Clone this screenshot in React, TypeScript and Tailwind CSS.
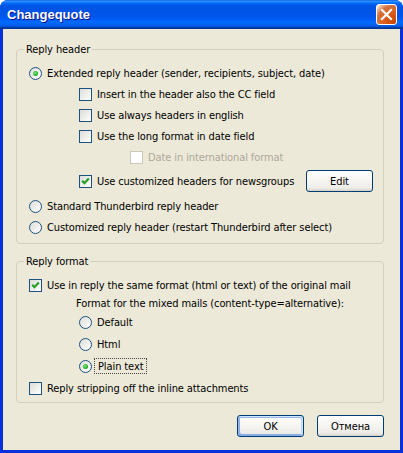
import React from "react";

function Check({ checked = false, disabled = false }: { checked?: boolean; disabled?: boolean }) {
  return (
    <span
      className={
        disabled
          ? "flex h-[13px] w-[13px] shrink-0 items-center justify-center border border-[#cac8bb] bg-white"
          : "flex h-[13px] w-[13px] shrink-0 items-center justify-center border border-[#1c5180] bg-[linear-gradient(135deg,#dcdcd7_0%,#ffffff_100%)]"
      }
    >
      {checked && (
        <svg width="11" height="11" viewBox="0 0 11 11">
          <path d="M2.2 4.8 L4.4 7.2 L8.8 2.6" stroke="#21a121" strokeWidth="2.2" fill="none" />
        </svg>
      )}
    </span>
  );
}

function Radio({ checked = false }: { checked?: boolean }) {
  return (
    <span className="flex h-[13px] w-[13px] shrink-0 items-center justify-center rounded-full border border-[#1c5180] bg-[linear-gradient(135deg,#dcdcd7_0%,#ffffff_100%)]">
      {checked && (
        <span className="h-[5px] w-[5px] rounded-full bg-[radial-gradient(circle_at_40%_40%,#7ee67e_0%,#24b224_60%,#118a11_100%)]" />
      )}
    </span>
  );
}

function Button({ label, def = false, className = "" }: { label: string; def?: boolean; className?: string }) {
  return (
    <div
      className={
        "flex h-[22px] w-[67px] items-center justify-center rounded-[3px] border border-[#003c74] bg-[linear-gradient(to_bottom,#ffffff_0%,#f3f2ee_60%,#ecebe6_86%,#d6d0c5_100%)] text-[11px] text-black " +
        (def
          ? "shadow-[inset_-1px_1px_#cee7ff,inset_1px_2px_#98b8ea,inset_-2px_2px_#bcd4f6,inset_1px_-1px_#89ade4,inset_2px_-2px_#89ade4] "
          : "") +
        className
      }
    >
      {label}
    </div>
  );
}

export default function App() {
  return (
    <div className="flex h-[453px] w-[403px] flex-col overflow-hidden rounded-t-[8px] bg-[#0831d9] font-['DejaVu_Sans_Condensed','Liberation_Sans',sans-serif] text-[11px] leading-[13px] tracking-[-0.1px] text-black">
      <div className="flex h-[29px] shrink-0 items-center justify-between bg-[linear-gradient(to_bottom,#0058ee_0%,#3593ff_4%,#288eff_6%,#127dff_8%,#036ffc_10%,#0262ee_14%,#0057e5_20%,#0054e3_24%,#0055eb_56%,#005bf5_66%,#026afe_76%,#0062ef_86%,#0052d6_92%,#0040ab_94%,#003092_100%)] pl-[7px] pr-[6px]">
        <span className="font-['Liberation_Sans',sans-serif] text-[13px] font-bold leading-[16px] tracking-normal text-white [text-shadow:1px_1px_#0f1089]">
          Changequote
        </span>
        <div className="flex h-[21px] w-[21px] items-center justify-center rounded-[3px] border border-white bg-[radial-gradient(circle_at_90%_90%,#cc4600_0%,#dc6527_55%,#cd7546_70%,#ffccb2_90%,#ffffff_100%)]">
          <svg width="13" height="13" viewBox="0 0 13 13">
            <path d="M2 2 L11 11 M11 2 L2 11" stroke="white" strokeWidth="2.2" strokeLinecap="square" />
          </svg>
        </div>
      </div>

      <div className="mx-[3px] mb-[3px] flex flex-1 flex-col bg-[#ece9d8] pl-[13px] pr-[16px] pt-[14px]">
        <fieldset className="rounded-[4px] border border-[#d0d0bf] pb-[5px]">
          <legend className="ml-[7px] px-[2px] leading-[13px]">Reply header</legend>
          <div className="flex flex-col pl-[12px] pt-[7px]">
            <div className="flex h-[21px] items-center gap-[5px]">
              <Radio checked />
              <span>Extended reply header (sender, recipients, subject, date)</span>
            </div>
            <div className="flex h-[21px] items-center gap-[5px] pl-[50px]">
              <Check />
              <span>Insert in the header also the CC field</span>
            </div>
            <div className="flex h-[21px] items-center gap-[5px] pl-[50px]">
              <Check />
              <span>Use always headers in english</span>
            </div>
            <div className="flex h-[21px] items-center gap-[5px] pl-[50px]">
              <Check />
              <span>Use the long format in date field</span>
            </div>
            <div className="flex h-[21px] items-center gap-[5px] pl-[101px]">
              <Check disabled />
              <span className="text-[#aca899]">Date in international format</span>
            </div>
            <div className="mt-[2px] flex h-[22px] items-center gap-[5px] pl-[50px] pr-[10px]">
              <Check checked />
              <span>Use customized headers for newsgroups</span>
              <Button label="Edit" className="ml-auto" />
            </div>
            <div className="mt-[4px] flex h-[21px] items-center gap-[5px]">
              <Radio />
              <span>Standard Thunderbird reply header</span>
            </div>
            <div className="flex h-[21px] items-center gap-[5px]">
              <Radio />
              <span>Customized reply header (restart Thunderbird after select)</span>
            </div>
          </div>
        </fieldset>

        <fieldset className="mt-[11px] rounded-[4px] border border-[#d0d0bf] pb-[3px]">
          <legend className="ml-[7px] px-[2px] leading-[13px]">Reply format</legend>
          <div className="flex flex-col pl-[12px] pt-[7px]">
            <div className="flex h-[20px] items-center gap-[5px]">
              <Check checked />
              <span>Use in reply the same format (html or text) of the original mail</span>
            </div>
            <div className="flex h-[16px] items-center pl-[47px]">
              <span>Format for the mixed mails (content-type=alternative):</span>
            </div>
            <div className="flex h-[22px] items-center gap-[5px] pl-[50px]">
              <Radio />
              <span>Default</span>
            </div>
            <div className="flex h-[22px] items-center gap-[5px] pl-[50px]">
              <Radio />
              <span>Html</span>
            </div>
            <div className="flex h-[22px] items-center gap-[2px] pl-[50px]">
              <Radio checked />
              <span className="flex h-[16px] items-center border border-dotted border-[#444] px-[3px]">Plain text</span>
            </div>
            <div className="flex h-[22px] items-center gap-[5px]">
              <Check />
              <span>Reply stripping off the inline attachments</span>
            </div>
          </div>
        </fieldset>

        <div className="mt-[12px] flex justify-end gap-[13px]">
          <Button label="OK" def />
          <Button label="Отмена" />
        </div>
      </div>
    </div>
  );
}
